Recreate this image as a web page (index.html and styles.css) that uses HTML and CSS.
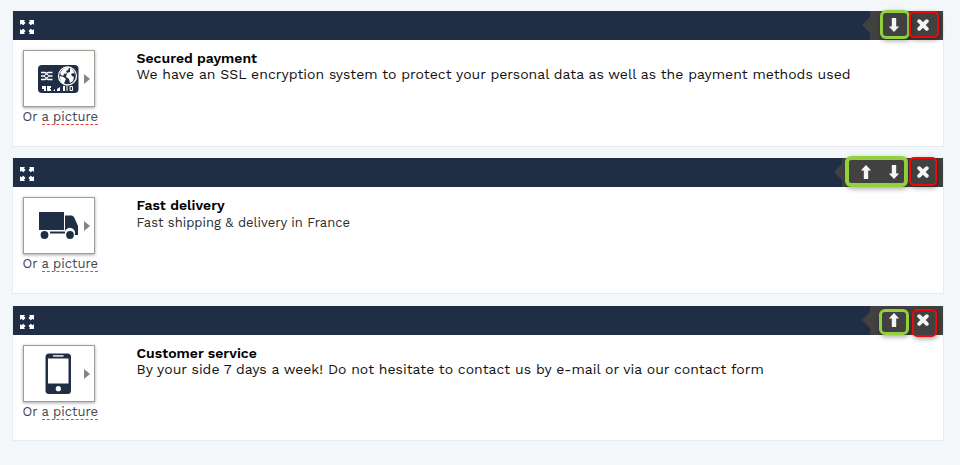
FILE: index.html
```html
<!DOCTYPE html>
<html lang="en">
<head>
  <meta charset="UTF-8">
  <meta name="viewport" content="width=device-width, initial-scale=1.0">
  <title>Reassurance blocks</title>
  <link rel="stylesheet" href="styles.css">
</head>
<body>

  <!-- Shared icons -->
  <svg class="sprite">
    <symbol id="i-expand" viewBox="0 0 14 14">
      <path d="M0 0h5L4 1.200 5.500 3 3.300 5.200 1.300 3.700 0 5zM14 0H9l1 1.200L8.500 3l2.200 2.200 2-1.500L14 5zM0 14h5l-1-1.200L5.500 11 3.300 8.800l-2 1.500L0 9zM14 14H9l1-1.200L8.500 11l2.200-2.200 2 1.500L14 9z"/>
    </symbol>
    <symbol id="i-up" viewBox="0 0 12 14">
      <path d="M6 0l5.200 5.500H8.200V14H3.800V5.500H.8z"/>
    </symbol>
    <symbol id="i-down" viewBox="0 0 12 14">
      <path d="M6 14l5.200-5.500H8.200V0H3.800v8.500H.8z"/>
    </symbol>
    <symbol id="i-close" viewBox="0 0 12 12">
      <path d="M2.200 2.200l7.600 7.600M9.800 2.200l-7.600 7.600" stroke="currentColor" stroke-width="3.800" stroke-linecap="round"/>
    </symbol>
  </svg>

  <div class="card">
    <div class="card-header">
      <svg class="expand"><use href="#i-expand"/></svg>
      <div class="tools">
        <a class="tool"><svg class="arrow"><use href="#i-down"/></svg></a>
        <a class="tool"><svg class="close"><use href="#i-close"/></svg></a>
        <span class="mark green g1"></span>
        <span class="mark red r1"></span>
      </div>
    </div>
    <div class="card-body">
      <div class="picker">
        <div class="icon-box">
          <svg class="icon" viewBox="0 0 42 42">
            <rect x="1" y="7" width="40.500" height="28" rx="4" fill="#1f2e45"/>
            <g fill="none" stroke="#fff" stroke-width="1.500">
              <path d="M4 14.500h4l1.500 1 1.500-1h4.500M4 18h3.500M11.500 18h4M4 21.500h4l1.500-1 1.500 1h4.500"/>
              <circle cx="9.500" cy="18" r="1.900" stroke-width="1"/>
            </g>
            <circle cx="30.500" cy="18" r="9" fill="none" stroke="#fff" stroke-width="1.300"/>
            <path d="M23 15l3-4 4-2 2 1-1 2-2 1 1 2-3 1-1 2-2-1zM22.500 18l4 1 2.500 2-1 2-1 3-3-2zM33 10l3 2 2 4-2-1-2 1 1 2 2 1-1 4-3 2-1-4-3-2 1-4 3-1z" fill="#fff"/>
            <path d="M5 28h4v5H7v-2H5zM10 28h4v2h-1v1h1v2h-4zM16 33l2-2v2zM20 31l3-2v4h-3zM26 28h2v5h-2z" fill="#fff"/>
            <path d="M30 28v5M33 28.500h2.500v4H33z" fill="none" stroke="#fff"/>
          </svg>
          <span class="caret"></span>
        </div>
        <div class="picture">Or <a>a picture</a></div>
      </div>
      <div class="text">
        <h3>Secured payment</h3>
        <p>We have an SSL encryption system to protect your personal data as well as the payment methods used</p>
      </div>
    </div>
  </div>

  <div class="card second">
    <div class="card-header">
      <svg class="expand"><use href="#i-expand"/></svg>
      <div class="tools">
        <a class="tool"><svg class="arrow"><use href="#i-up"/></svg></a>
        <a class="tool"><svg class="arrow"><use href="#i-down"/></svg></a>
        <a class="tool"><svg class="close"><use href="#i-close"/></svg></a>
        <span class="mark green g2"></span>
        <span class="mark red r2"></span>
      </div>
    </div>
    <div class="card-body">
      <div class="picker">
        <div class="icon-box">
          <svg class="icon" viewBox="0 0 42 42" fill="#1f2e45">
            <path d="M2 7h25v18H2zM28 10.500h7l2 1.500 4 9v9h-3.300a5 5 0 0 0-9.700-4z"/>
            <path d="M13 26.500h15v2H13z"/>
            <circle cx="7.500" cy="30" r="3.900"/>
            <circle cx="33" cy="30" r="3.900"/>
          </svg>
          <span class="caret"></span>
        </div>
        <div class="picture">Or <a>a picture</a></div>
      </div>
      <div class="text">
        <h3>Fast delivery</h3>
        <p class="small">Fast shipping &amp; delivery in France</p>
      </div>
    </div>
  </div>

  <div class="card third">
    <div class="card-header">
      <svg class="expand"><use href="#i-expand"/></svg>
      <div class="tools">
        <a class="tool"><svg class="arrow"><use href="#i-up"/></svg></a>
        <a class="tool"><svg class="close"><use href="#i-close"/></svg></a>
        <span class="mark green g3"></span>
        <span class="mark red r3"></span>
      </div>
    </div>
    <div class="card-body">
      <div class="picker">
        <div class="icon-box">
          <svg class="icon" viewBox="0 0 42 42">
            <rect x="8.500" y="0.500" width="25.500" height="40.500" rx="3.500" fill="#1f2e45"/>
            <rect x="11" y="5.500" width="20.500" height="25" fill="#fff"/>
            <rect x="16" y="2" width="10.500" height="1.800" fill="#ccc"/>
            <circle cx="21.300" cy="35.700" r="2.600" fill="#fff"/>
          </svg>
          <span class="caret"></span>
        </div>
        <div class="picture">Or <a>a picture</a></div>
      </div>
      <div class="text">
        <h3>Customer service</h3>
        <p>By your side 7 days a week! Do not hesitate to contact us by e-mail or via our contact form</p>
      </div>
    </div>
  </div>

</body>
</html>
```
FILE: styles.css
```css
* { box-sizing: border-box; margin: 0; padding: 0; }

body {
  font-family: "Work Sans", Inter, "Liberation Sans", sans-serif;
  background: #f3f7fa;
  padding: 11px 16px 0 12px;
  height: 465px;
  overflow: hidden;
}

.sprite { display: none; }

.card {
  height: 136px;
  background: #fff;
  border: 1px solid #e6ebef;
  border-top: none;
  margin-bottom: 11px;
}
.card.second { margin-bottom: 12px; }
.card.third { height: 135px; }

.card-header {
  height: 29px;
  background: #1f2e45;
  display: flex;
  justify-content: space-between;
  align-items: center;
  padding-left: 7px;
}

.expand { width: 14px; height: 14px; fill: #fff; margin-top: 2px; }

/* Move / delete buttons */
.tools {
  position: relative;
  display: flex;
  height: 29px;
  background: #414141;
  padding: 0 7px 0 10px;
}
.tools::before {
  content: "";
  position: absolute;
  left: -8px;
  top: 6px;
  border: 8px solid transparent;
  border-left: none;
  border-right-color: #414141;
}

.tool {
  width: 28px;
  height: 28px;
  display: flex;
  justify-content: center;
  align-items: center;
  color: #f5f5f5;
}
.tool .close { margin-left: 1px; }
.arrow { width: 12px; height: 14px; fill: #f5f5f5; }
.close { width: 12px; height: 12px; }

/* Coloured frames over the buttons */
.mark { position: absolute; box-shadow: 1px 2px 5px rgba(0, 0, 0, 0.35); }
.green { border: 3px solid #92d13d; border-radius: 6px; }
.red { border: 2px solid #f00808; border-radius: 5px; }

.g1 { right: 33px; top: -1px; width: 30px; height: 29px; }
.r1 { right: 4px; top: 0; width: 30px; height: 27px; }
.g2 { right: 35px; top: -2px; width: 63px; height: 31px; border-width: 4px; }
.r2 { right: 6px; top: -1px; width: 28px; height: 29px; }
.g3 { right: 34px; top: 3px; width: 30px; height: 26px; }
.r3 { right: 6px; top: 3px; width: 25px; height: 28px; }

.card-body {
  display: flex;
  padding: 10px 10px 0;
}

.picker { width: 113.5px; }

.icon-box {
  width: 72px;
  height: 57px;
  border: 1px solid #9aa095;
  box-shadow: 0 1px 3px rgba(0, 0, 0, 0.35);
  display: flex;
  align-items: center;
  padding-left: 13px;
}
.icon { width: 42px; height: 42px; }
.caret {
  margin-left: 5px;
  border: 5px solid transparent;
  border-left: 6px solid #858585;
  border-right: none;
}

.picture {
  font-size: 13px;
  line-height: 16px;
  margin: 2px 0 0 -0.5px;
  color: #43484f;
  white-space: nowrap;
}
.picture a {
  display: inline-block;
  line-height: 15px;
  border-bottom: 1px dashed #e04848;
}

.text { color: #000; white-space: nowrap; }
.text h3 { font-size: 14px; font-weight: 600; line-height: 16px; }
.text p { font-size: 14px; line-height: 16px; letter-spacing: 0.015px; color: #111; }
.text p.small { font-size: 13px; line-height: 19px; letter-spacing: 0; color: #2c2c2c; }
```
